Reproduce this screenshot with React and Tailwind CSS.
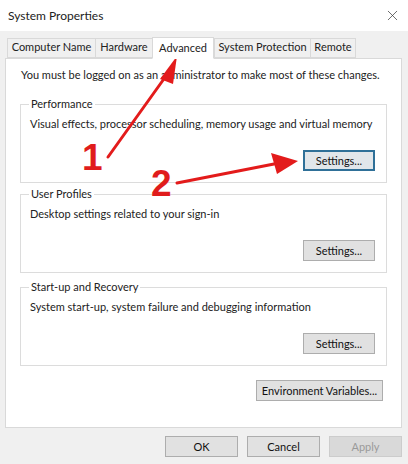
import { X } from "lucide-react";

const tabs = [
  { label: "Computer Name", w: "w-[88px]" },
  { label: "Hardware", w: "w-[57px]" },
  { label: "Advanced", w: "w-[62px]", active: true },
  { label: "System Protection", w: "w-[96px]" },
  { label: "Remote", w: "w-[46px]" },
];

// Classic win32 push button
function WinButton({ children, className = "", focused, disabled }) {
  return (
    <button
      className={`h-[21px] text-[11px] leading-none whitespace-nowrap border ${
        focused
          ? "border-[#2f7098] bg-[#e1e6ea] border-[2px] text-[#111]"
          : disabled
            ? "border-[#cccccc] bg-[#d9d9d9] text-[#9a9a9a]"
            : "border-[#adadad] bg-[#e1e1e1] text-[#111]"
      } ${className}`}
    >
      {children}
    </button>
  );
}

function Group({ title, text, top, focused }) {
  return (
    <fieldset className={`min-w-0 border border-[#dcdcdc] mx-[14px] ${top} px-[9px] pb-[11px] pt-0`}>
      <legend className="ml-[-1px] px-[2px] text-[11px] leading-[14px] text-[#222] whitespace-nowrap">{title}</legend>
      <p className="text-[11px] leading-[14px] text-[#222] mt-[6px] whitespace-nowrap">{text}</p>
      <div className="flex justify-end mt-[19px]">
        <WinButton focused={focused} className="w-[72px] mr-[2px]">Settings...</WinButton>
      </div>
    </fieldset>
  );
}

export default function App() {
  return (
    <div
      className="relative w-[408px] h-[464px] bg-[#f0f0f0] overflow-hidden text-[#1a1a1a]"
      style={{ fontFamily: 'Lato, "Liberation Sans", sans-serif' }}
    >
      {/* title bar */}
      <div className="h-[31px] bg-white flex items-center justify-between pl-[8px] pr-[7px]">
        <span className="text-[12px] text-[#222]">System Properties</span>
        <X size={17} strokeWidth={1} className="text-[#333]" />
      </div>

      {/* tabs */}
      <div className="flex items-end h-[27px] pl-[7px] pt-[6px]">
        {tabs.map((t) =>
          t.active ? (
            <div
              key={t.label}
              className={`${t.w} h-[22px] -mb-px relative z-10 bg-white border border-[#d9d9d9] border-b-white flex items-center justify-center text-[11px] text-[#222] whitespace-nowrap`}
            >
              {t.label}
            </div>
          ) : (
            <div
              key={t.label}
              className={`${t.w} h-[20px] bg-[#f0f0f0] border border-[#d9d9d9] border-r-0 last:border-r flex items-center justify-center text-[11px] text-[#222] pb-[1px] whitespace-nowrap`}
            >
              {t.label}
            </div>
          )
        )}
      </div>

      {/* panel */}
      <div className="mx-[5px] w-[397px] h-[370px] bg-white border border-[#d9d9d9] flex flex-col">
        <p className="text-[11px] leading-[14px] text-[#222] ml-[15px] mt-[9px] whitespace-nowrap">
          You must be logged on as an administrator to make most of these changes.
        </p>
        <Group
          top="mt-[15px]"
          focused
          title="Performance"
          text="Visual effects, processor scheduling, memory usage and virtual memory"
        />
        <Group
          top="mt-[4px]"
          title="User Profiles"
          text="Desktop settings related to your sign-in"
        />
        <Group
          top="mt-[7px]"
          title="Start-up and Recovery"
          text="System start-up, system failure and debugging information"
        />
        <div className="flex justify-end mr-[18px] mt-[14px]">
          <WinButton className="w-[127px]">Environment Variables...</WinButton>
        </div>
      </div>

      {/* dialog buttons */}
      <div className="flex justify-end gap-[9px] pr-[6px] mt-[8px]">
        <WinButton className="w-[73px]">OK</WinButton>
        <WinButton className="w-[73px]">Cancel</WinButton>
        <WinButton className="w-[73px]" disabled>Apply</WinButton>
      </div>

      {/* red annotation overlay */}
      <svg className="absolute inset-0 pointer-events-none" width="408" height="464">
        <line x1="108" y1="157" x2="166" y2="76" stroke="#e31b1b" strokeWidth="3" strokeLinecap="round" />
        <polygon points="177,56 160,79 173,84" fill="#e31b1b" />
        <line x1="177" y1="183" x2="274" y2="164" stroke="#e31b1b" strokeWidth="3" strokeLinecap="round" />
        <polygon points="298,161 271,153 277,174" fill="#e31b1b" />
      </svg>
      <span
        className="absolute left-[82px] top-[139px] text-[37px] font-bold text-[#e01c1c] leading-none"
        style={{ fontFamily: '"Liberation Sans", Arial, sans-serif' }}
      >
        1
      </span>
      <span
        className="absolute left-[151px] top-[165px] text-[37px] font-bold text-[#e01c1c] leading-none"
        style={{ fontFamily: '"Liberation Sans", Arial, sans-serif' }}
      >
        2
      </span>
    </div>
  );
}
